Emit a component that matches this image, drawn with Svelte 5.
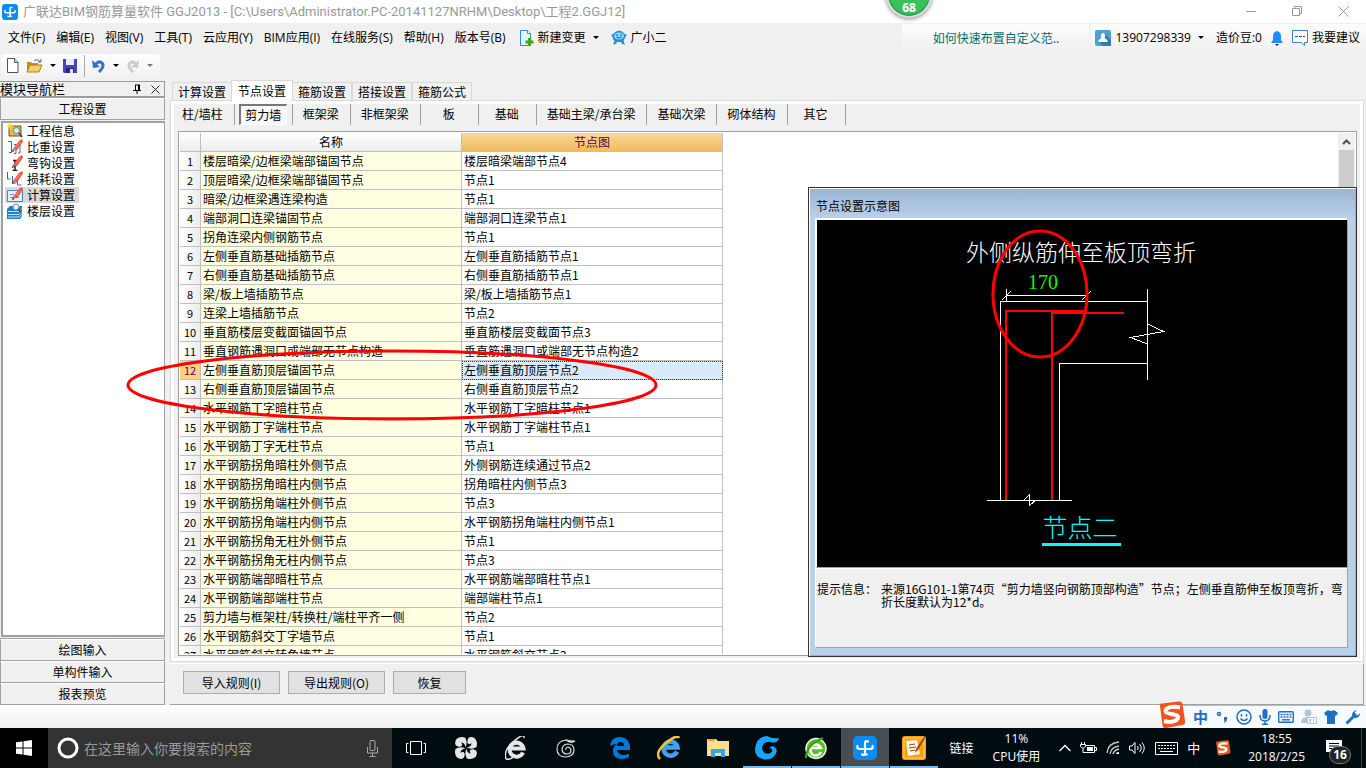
<script lang="ts">
  const menus = ["文件(F)", "编辑(E)", "视图(V)", "工具(T)", "云应用(Y)", "BIM应用(I)", "在线服务(S)", "帮助(H)", "版本号(B)"];
  const navItems = [
    { icon: "info", label: "工程信息" },
    { icon: "weight", label: "比重设置" },
    { icon: "hook", label: "弯钩设置" },
    { icon: "loss", label: "损耗设置" },
    { icon: "calc", label: "计算设置" },
    { icon: "floor", label: "楼层设置" },
  ];
  const navSections = ["绘图输入", "单构件输入", "报表预览"];
  const tabs = ["计算设置", "节点设置", "箍筋设置", "搭接设置", "箍筋公式"];
  const categories = ["柱/墙柱", "剪力墙", "框架梁", "非框架梁", "板", "基础", "基础主梁/承台梁", "基础次梁", "砌体结构", "其它"];
  const rows = [
    ["楼层暗梁/边框梁端部锚固节点", "楼层暗梁端部节点4"],
    ["顶层暗梁/边框梁端部锚固节点", "节点1"],
    ["暗梁/边框梁遇连梁构造", "节点1"],
    ["端部洞口连梁锚固节点", "端部洞口连梁节点1"],
    ["拐角连梁内侧钢筋节点", "节点1"],
    ["左侧垂直筋基础插筋节点", "左侧垂直筋插筋节点1"],
    ["右侧垂直筋基础插筋节点", "右侧垂直筋插筋节点1"],
    ["梁/板上墙插筋节点", "梁/板上墙插筋节点1"],
    ["连梁上墙插筋节点", "节点2"],
    ["垂直筋楼层变截面锚固节点", "垂直筋楼层变截面节点3"],
    ["垂直钢筋遇洞口或端部无节点构造", "垂直筋遇洞口或端部无节点构造2"],
    ["左侧垂直筋顶层锚固节点", "左侧垂直筋顶层节点2"],
    ["右侧垂直筋顶层锚固节点", "右侧垂直筋顶层节点2"],
    ["水平钢筋丁字暗柱节点", "水平钢筋丁字暗柱节点1"],
    ["水平钢筋丁字端柱节点", "水平钢筋丁字端柱节点1"],
    ["水平钢筋丁字无柱节点", "节点1"],
    ["水平钢筋拐角暗柱外侧节点", "外侧钢筋连续通过节点2"],
    ["水平钢筋拐角暗柱内侧节点", "拐角暗柱内侧节点3"],
    ["水平钢筋拐角端柱外侧节点", "节点3"],
    ["水平钢筋拐角端柱内侧节点", "水平钢筋拐角端柱内侧节点1"],
    ["水平钢筋拐角无柱外侧节点", "节点1"],
    ["水平钢筋拐角无柱内侧节点", "节点3"],
    ["水平钢筋端部暗柱节点", "水平钢筋端部暗柱节点1"],
    ["水平钢筋端部端柱节点", "端部端柱节点1"],
    ["剪力墙与框架柱/转换柱/端柱平齐一侧", "节点2"],
    ["水平钢筋斜交丁字墙节点", "节点1"],
    ["水平钢筋斜交转角墙节点", "水平钢筋斜交节点3"],
  ];

  let activeNav = $state(4);
  let activeTab = $state(1);
  let activeCategory = $state(1);
  let activeRow = $state(11);
</script>

{#snippet logo(size: number)}
  <svg width={size} height={size} viewBox="0 0 24 24">
    <rect width="24" height="24" rx="5" fill="#0a8cf0" />
    <path d="M15 5.500q-3-1.500-3 2v9q0 3.500-3 2M4.500 10q-1 3 2.500 3h10q3.500 0 2.500-3M12 18.500h2" fill="none" stroke="#fff" stroke-width="2.200" stroke-linecap="round" />
  </svg>
{/snippet}

{#snippet sogou(size: number)}
  <svg width={size} height={size} viewBox="0 0 28 28">
    <path d="M2 5Q1 3 4 2.500L21 .5q3-.5 3.500 2.500L27 20q.5 3-2.500 4L8 27q-3 .5-3.500-2.500z" fill="#f0521c" />
    <path d="M22 6.500C14 4.500 7 7 7.500 10.500c.5 3 13 2 12.500 6-.5 4-8 5.500-14 3.500" fill="none" stroke="#fff" stroke-width="4" />
  </svg>
{/snippet}

{#snippet pencil()}
  <path d="M5.500 10.500 12 2l3-2 1 2.500-6 8.500z" fill="#f0503c" />
  <path d="m5.500 10.500-.5 2.500 3-1z" fill="#5a3a30" />
  <path d="m8 9.500 5.500-6.500" stroke="#ff9c8a" />
{/snippet}

<div class="desktop">
  <header class="titlebar">
    {@render logo(16)}
    <h1>广联达BIM钢筋算量软件 GGJ2013 - [C:\Users\Administrator.PC-20141127NRHM\Desktop\工程2.GGJ12]</h1>
    <div class="window-buttons">
      <button aria-label="最小化"><svg width="11" height="11"><path d="M0 5.500h10" /></svg></button>
      <button aria-label="还原"><svg width="11" height="11"><path d="M.5 2.500h7v7h-7zM2.500 2.500v-2h7v7h-2" /></svg></button>
      <button aria-label="关闭"><svg width="11" height="11"><path d="m.5.5 10 10m0-10-10 10" /></svg></button>
    </div>
    <div class="score">68</div>
  </header>

  <nav class="menubar">
    {#each menus as menu}
      <button>{menu}</button>
    {/each}
    <button class="with-icon">
      <svg width="15" height="16" viewBox="0 0 15 16">
        <path d="M1.500.5h7l3 3v12h-10z" fill="#e2f3fc" stroke="#2b8fc9" />
        <path d="M8.500.5v3h3" fill="#fff" stroke="#2b8fc9" />
        <path d="M9 8h3v2.500h2.500v3H12V16H9v-2.500H6.500v-3H9z" fill="#45a81c" />
      </svg>
      新建变更
      <i class="caret"></i>
    </button>
    <button class="with-icon">
      <svg width="16" height="16" viewBox="0 0 16 16">
        <path d="M1.500 7 0 5l2-1q6-7 12 0l2 1-1.500 2Q13 10 12.500 11l1.500 3.500-3-.5-1-2H6l-1 2-3 .5L3.500 11Q2 10 1.500 7z" fill="#1e93e6" />
        <ellipse cx="8" cy="6" rx="5" ry="3.500" fill="#8fd4fa" />
        <path d="M6 4v2m4-2v2M5.500 7q2.500 2 5 0" fill="none" stroke="#145a9c" />
      </svg>
      广小二
    </button>
    <div class="promo"><a href="#help">如何快速布置自定义范..</a></div>
    <div class="account">
      <button class="user">
        <svg width="16" height="16" viewBox="0 0 16 16">
          <rect width="16" height="16" rx="2" fill="#4ba3d3" />
          <path d="m10 4 6 6v6H8l-4-4z" fill="#347fa8" />
          <path d="M8 3a2.500 3 0 0 1 1.500 5l3 2v2h-9v-2l3-2A2.500 3 0 0 1 8 3z" fill="#fff" />
        </svg>
        13907298339
        <i class="caret"></i>
      </button>
      <span>造价豆:0</span>
      <button aria-label="通知">
        <svg width="12" height="16" viewBox="0 0 12 16">
          <path d="M6 1q4 1 4 5v4l2 3H0l2-3V6q0-4 4-5z" fill="#1e8bff" /><path d="M4 14h4l-2 2z" fill="#126" />
        </svg>
      </button>
      <button class="suggest">
        <svg width="16" height="16" viewBox="0 0 16 16">
          <path d="M.5.5h15v12h-3v3l-3-3h-9z" fill="#fff" stroke="#3b7fd4" /><path d="M3 6.500h10" stroke="#247" stroke-dasharray="3 1" />
        </svg>
        我要建议
      </button>
    </div>
  </nav>

  <div class="toolbar-row">
    <div class="toolbar">
      <button aria-label="新建">
        <svg width="12" height="15" viewBox="0 0 12 15"><path d="M.5.5h7l3.500 4v10H.5z" fill="#fff" stroke="#456" /><path d="M7.500.5v4H11" fill="#cde" stroke="#456" /></svg>
      </button>
      <button aria-label="打开">
        <svg width="17" height="15" viewBox="0 0 17 15">
          <path d="M1 14V4h4l1 1h6v9z" fill="#c98d1d" /><path d="m1 14 3-7h12l-3 7z" fill="#f7cf6a" stroke="#b57e1c" />
          <path d="M8 3q4-3 6 1m1-3v3h-3" fill="none" stroke="#46647f" />
        </svg>
      </button>
      <i class="caret"></i>
      <button aria-label="保存">
        <svg width="14" height="14" viewBox="0 0 14 14">
          <path d="M0 0h14v14H1l-1-1z" fill="#4448b5" /><path d="M3 0h8v6H3z" fill="#e8ecfa" /><path d="M3 9h8v5H3z" fill="#252870" /><path d="M7 10h3v4H7z" fill="#dde" />
        </svg>
      </button>
      <span class="divider"></span>
      <button aria-label="撤销">
        <svg width="14" height="14" viewBox="0 0 14 14"><path d="M3 6q4-5 7-2t-3 9" fill="none" stroke="#3272c8" stroke-width="3" /><path d="m0 1 1 8 7-1z" fill="#3272c8" /></svg>
      </button>
      <i class="caret"></i>
      <button aria-label="重做">
        <svg width="14" height="14" viewBox="0 0 14 14"><path d="M11 6Q7 1 4 4t3 9" fill="none" stroke="#ccc" stroke-width="3" /><path d="m13 1-1 8-7-1z" fill="#ccc" /></svg>
      </button>
      <i class="caret faded"></i>
    </div>
  </div>

  <main>
    <aside>
      <div class="aside-head">
        <span>模块导航栏</span>
        <button aria-label="固定"><svg width="9" height="10" viewBox="0 0 9 10"><path d="M2 1h5M2.500 1v5M6 1v5M0 6.500h8M4 7v3" fill="none" stroke="#000" /><path d="M5 1h2v5H5z" /></svg></button>
        <button aria-label="关闭"><svg width="9" height="9" viewBox="0 0 9 9"><path d="m.5.5 8 8m0-8-8 8" stroke="#222" /></svg></button>
      </div>
      <button class="section">工程设置</button>
      <ul>
        {#each navItems as item, i}
          <li>
            <button class:selected={i === activeNav} onclick={() => (activeNav = i)}>
              <svg width="16" height="16" viewBox="0 0 16 16">
                {#if item.icon === "info"}
                  <path d="M2 3h12v10H2z" fill="#e9b64a" stroke="#73521b" />
                  <path d="M3 0v7M0 3h7M1 1l4 4m0-4L1 5" stroke="#ffdf35" />
                  <circle cx="9.500" cy="7.500" r="3" fill="#d6edfb" stroke="#5f86ab" />
                  <path d="m12 10 3 4" stroke="#39536d" stroke-width="2" />
                {:else if item.icon === "weight"}
                  <path d="M1 2.500h3.500v11H2M7 5.500h2v9H7M13 5v9h-2" fill="none" stroke="#3b68b3" />
                  {@render pencil()}
                {:else if item.icon === "hook"}
                  <path d="M8 6v9M5.500 15.500h5M6 5.500h4" stroke="#222" stroke-width="1.500" />
                  {@render pencil()}
                {:else if item.icon === "loss"}
                  <path d="M.5 1v7h3M5.500 5v7h4M10.500 8v6h4" fill="none" stroke="#3b68b3" />
                  {@render pencil()}
                {:else if item.icon === "calc"}
                  <path d="M.5 3.500h15v11H.5z" fill="#e5f0fd" stroke="#4b81cc" />
                  <path d="M3 7.500h4M3 10.500h9" stroke="#6d9ad8" />
                  {@render pencil()}
                {:else}
                  <path d="M3 3h12v10l-2 3H0V6z" fill="#1d80cc" />
                  <path d="M1 8.500h11l3-3M1 11.500h11l3-3M1 14h11l3-3" fill="none" stroke="#bfe5ff" />
                  <circle cx="9" cy="4" r="3" fill="#e6eff5" stroke="#7c8f9e" />
                  <path d="m11 6 3 3" stroke="#555" stroke-width="2" />
                {/if}
              </svg>
              <span>{item.label}</span>
            </button>
          </li>
        {/each}
      </ul>
      {#each navSections as section}
        <button class="section">{section}</button>
      {/each}
    </aside>

    <section class="workspace">
      <div class="tabs" role="tablist">
        {#each tabs as tab, i}
          <button role="tab" aria-selected={i === activeTab} class:active={i === activeTab} onclick={() => (activeTab = i)}>{tab}</button>
        {/each}
      </div>

      <div class="page">
        <div class="categories">
          {#each categories as category, i}
            <button class:pressed={i === activeCategory} onclick={() => (activeCategory = i)}><span>{category}</span></button>
          {/each}
        </div>
        <div class="grid">
          <div class="grid-body">
            <table>
              <colgroup><col class="col-no" /><col class="col-name" /><col class="col-node" /></colgroup>
              <thead>
                <tr><th></th><th>名称</th><th class="current">节点图</th></tr>
              </thead>
              <tbody>
                {#each rows as [name, node], i}
                  <tr class:active={i === activeRow} onclick={() => (activeRow = i)}>
                    <th scope="row">{i + 1}</th>
                    <td class="name">{name}</td>
                    <td class="node">{node}</td>
                  </tr>
                {/each}
              </tbody>
            </table>
          </div>
          <div class="scrollbar">
            <button aria-label="向上滚动"><svg width="9" height="6" viewBox="0 0 9 6"><path d="m1 5 3.500-3.500L8 5" fill="none" stroke="#505050" stroke-width="2" /></svg></button>
            <div class="thumb"></div>
          </div>
        </div>
      </div>

      <div class="actions">
        <button>导入规则(I)</button>
        <button>导出规则(O)</button>
        <button class="narrow">恢复</button>
      </div>

      <div class="dialog" role="dialog" aria-label="节点设置示意图">
        <h2>节点设置示意图</h2>
        <svg class="drawing" viewBox="0 0 530 347">
          <g fill="none" stroke="#fff" shape-rendering="crispEdges">
            <path d="M189.500 69v12M189 75.500h82M185 80l9-9M265 80l9-9" />
            <path d="M183.500 280V81.500h147M330.500 69v91M330.500 143.500h-88V280" />
            <path d="M330.500 104l16 7.500-33 6 17 6.500" />
            <path d="M170 280.500h85M207 280l5-5v11l7-6" />
          </g>
          <text x="264" y="41" class="caption">外侧纵筋伸至板顶弯折</text>
          <text x="226" y="69" class="dimension">170</text>
          <path d="M189 280V91h80M235 280V93h72" fill="none" stroke="#f00" stroke-width="2" />
          <text x="263" y="317" class="node-name">节点二</text>
          <path d="M225 324.500h79" stroke="#0ff" stroke-width="3" />
          <ellipse cx="223" cy="74" rx="47" ry="63" fill="none" stroke="#f00" stroke-width="3" />
        </svg>
        <div class="hint">
          <span>提示信息：</span>
          <p>来源16G101-1第74页“剪力墙竖向钢筋顶部构造”节点；左侧垂直筋伸至板顶弯折，弯<br />折长度默认为12*d。</p>
        </div>
      </div>
    </section>

    <svg class="mark" width="532" height="73" viewBox="0 0 532 73">
      <ellipse cx="266" cy="36" rx="264" ry="34" fill="none" stroke="#f00" stroke-width="3" />
    </svg>
  </main>

  <div class="statusbar">
    <div class="ime">
      <div class="ime-logo">{@render sogou(28)}</div>
      <b>中</b>
      <svg width="14" height="14" viewBox="0 0 14 14"><circle cx="4" cy="4" r="1.500" fill="none" stroke="#1b6fc4" stroke-width="1.500" /><path d="M9 7h3q1 4-3 6 1-2 0-3z" fill="#1b6fc4" /></svg>
      <svg width="16" height="16" viewBox="0 0 16 16"><circle cx="8" cy="8" r="7" fill="none" stroke="#1b6fc4" stroke-width="1.500" /><path d="M5.500 5v2.500M10.500 5v2.500M4.500 9.500q3.500 4 7 0" fill="none" stroke="#1b6fc4" stroke-width="1.500" /></svg>
      <svg width="12" height="16" viewBox="0 0 12 16"><rect x="3.500" width="5" height="10" rx="2.500" fill="#1b6fc4" /><path d="M1 6q0 6 5 6t5-6M6 12v3M3 15.200h6" fill="none" stroke="#1b6fc4" stroke-width="1.500" /></svg>
      <svg width="16" height="12" viewBox="0 0 16 12"><rect x=".7" y=".7" width="14.600" height="10.600" rx="1" fill="none" stroke="#1b6fc4" stroke-width="1.400" /><path d="M2.500 3.500h11M2.500 6h11" stroke="#1b6fc4" stroke-width="1.500" stroke-dasharray="2 1" /><path d="M4 8.800h8" stroke="#1b6fc4" stroke-width="1.400" /></svg>
      <svg width="16" height="16" viewBox="0 0 16 16"><circle cx="7" cy="4" r="3.500" fill="#b4c4da" /><path d="M0 14q0-6 6-6h4v6z" fill="#b4c4da" /><path d="M6.500 8.500h9v6h-9z" fill="#fff" stroke="#b4c4da" /><path d="M8 10.500h2v1H8.500v1.500H10M12.500 10v3" fill="none" stroke="#b4c4da" /></svg>
      <svg width="14" height="14" viewBox="0 0 14 14"><path d="M4 0q3 2 6 0l4 3-2 3-1-.5V14H3V5.500L2 6 0 3z" fill="#1b6fc4" /></svg>
      <svg width="15" height="15" viewBox="0 0 15 15"><path d="m1.500 13.500 8-8" stroke="#1b6fc4" stroke-width="3" /><path d="M12 0 9.500 2.500 12.500 5.500 15 3q0 5-5 5Q7 7 7 5q0-4 5-5z" fill="#1b6fc4" /></svg>
    </div>
  </div>

  <footer class="taskbar">
    <button class="start" aria-label="开始">
      <svg width="16" height="16" viewBox="0 0 16 16"><path d="M0 2.300 6.500 1.400v6.100H0zM7.500 1.200 16 0v7.500H7.500zM0 8.500h6.500v6.100L0 13.700zM7.500 8.500H16V16l-8.500-1.200z" fill="#fff" /></svg>
    </button>
    <label class="search">
      <svg width="22" height="22"><circle cx="11" cy="11" r="9" fill="none" stroke="#fff" stroke-width="3" /></svg>
      <input type="text" placeholder="在这里输入你要搜索的内容" aria-label="搜索" />
      <svg width="11" height="17" viewBox="0 0 11 17"><rect x="3" y=".5" width="5" height="10" rx="1" fill="none" stroke="#aaa" /><path d="M.5 7v6h10V7M5.500 13v3M2.500 16.500h6" fill="none" stroke="#aaa" /></svg>
    </label>
    <div class="apps pinned">
      <button aria-label="任务视图"><svg width="20" height="16" viewBox="0 0 20 16"><path d="M4.500 1.500h11v13h-11zM2.500 3.500h-2v9h2M17.500 3.500h2v9h-2" fill="none" stroke="#fff" /></svg></button>
      <button aria-label="启动器">
        <svg width="22" height="22" viewBox="0 0 22 22">
          <g fill="#e6e6e6">
            <path d="M10.500 10.500Q13 5 10 .5 5-1 1.500 2-1 6 1 8.500q4 2.500 6 0 .5-2-1-3 4 0 4.500 5z" />
            <path d="M11.500 10.500Q17 13 21.500 10 23 5 20 1.500 16-1 13.500 1q-2.500 4 0 6 2 .5 3-1 0 4-5 4.500z" />
            <path d="M11.500 11.500Q9 17 12 21.500q5 1.500 8.500-1.500 2.500-4 .5-6.500-4-2.500-6 0-.5 2 1 3-4 0-4.500-5z" />
            <path d="M10.500 11.500Q5 9 .5 12-1 17 2 20.500q4 2.500 6.500.5 2.500-4 0-6-2-.5-3 1 0-4 5-4.500z" />
          </g>
        </svg>
      </button>
      <button aria-label="浏览器">
        <svg width="22" height="24" viewBox="0 0 22 24"><path d="M18 16.500A7 7 0 1 1 18.500 12.500H6" fill="none" stroke="#e6e6e6" stroke-width="4" /><path d="M1 23Q-2 14 9 5t10-3M1 23q5 1 8-3" fill="none" stroke="#e6e6e6" stroke-width="1.500" /></svg>
      </button>
      <button aria-label="广联达">
        <svg width="20" height="20" viewBox="0 0 20 20"><path d="M19 3q-6 0-9-1-9 1-9 9 0 8 9 8 8-1 8-7 0-6-7-6-5 1-5 6 1 4 5 4 4 0 4-4-1-3-3-3-3 1-2 3M10 2q5 4 9 1" fill="none" stroke="#ddd" stroke-width="1.200" /></svg>
      </button>
    </div>
    <div class="apps">
      <button aria-label="Edge">
        <svg width="20" height="22" viewBox="0 0 20 22"><path d="M0 9Q1 0 10.500 0 20 1 20 11v2H7q1 5 7 5 3 0 5-1.500V20q-3 2-7 2-9 0-9-8 0-5 4-7-4 0-7 2zm7 0h7q0-4-3.500-4T7 9z" fill="#0078d7" /></svg>
      </button>
      <button aria-label="Internet Explorer">
        <svg width="24" height="24" viewBox="0 0 24 24"><path d="M20 15.500a7 7 0 1 1 .5-4H8" fill="none" stroke="#3fa2ea" stroke-width="4.500" /><path d="M3 23Q-3 17 9 7 20-2 22 2" fill="none" stroke="#f6c52d" stroke-width="2.500" /></svg>
      </button>
      <button aria-label="文件资源管理器">
        <svg width="22" height="20" viewBox="0 0 22 20"><path d="M0 1h9l2 2h11v15H0z" fill="#ffe08a" /><path d="M1 1h7v2H1z" fill="#e9a825" /><path d="M4 19v-8h14v8h-4v-4H8v4z" fill="#35a7e0" /></svg>
      </button>
      <button class="running" aria-label="广联达G+">
        <svg width="24" height="24" viewBox="0 0 24 24"><path d="M24 2q-1 5-7 4.500-5-2-8 1-4 5 0 9 5 3 8-1 1-4-3-3 2-3 5-2 4 3 2 7-3 6-10 6Q0 23 0 13 1 1 12 0q5 3 12 2z" fill="#1ba4fb" /></svg>
      </button>
      <button class="running" aria-label="360浏览器">
        <svg width="22" height="24" viewBox="0 0 22 24"><circle cx="11" cy="12.500" r="10" fill="#56bd25" stroke="#e9f7df" stroke-width="1.500" /><path d="M16 16a5.500 5.500 0 1 1 0-4H7" fill="none" stroke="#fff" stroke-width="2.500" /><path d="M1 22Q1 9 18 2" fill="none" stroke="#3d9c1a" stroke-width="2" /></svg>
      </button>
      <button class="running focused" aria-label="广联达BIM钢筋算量软件">{@render logo(24)}</button>
      <button class="running" aria-label="便笺">
        <svg width="24" height="24" viewBox="0 0 24 24"><rect width="24" height="24" rx="3" fill="#f6a019" /><path d="M2 2h20v20H2z" fill="none" stroke="#ffd35c" /><path d="m4 5 11-1 3 14-12 2z" fill="#fff6e0" /><path d="m7 9 6-1M7 12l7-1M8 15l5-1" stroke="#86511a" /><path d="M22 1 14 13l-1 4 3-3 7-12z" fill="#a03a12" /></svg>
      </button>
    </div>
    <div class="tray">
      <span class="links">链接</span>
      <span class="cpu">11%<br />CPU使用</span>
      <svg width="12" height="8" viewBox="0 0 12 8"><path d="m.5 7 5.500-5.500L11.500 7" fill="none" stroke="#fff" stroke-width="1.300" /></svg>
      <svg width="17" height="12" viewBox="0 0 17 12"><path d="M5.500 3.500h9v7H4.500M15 5.500h1.500v3H15M1.500 0v2M4.500 0v2M.5 2.500h5v2l-2 1.500h-1l-2-1.500zM3 6v4.500h2" fill="none" stroke="#fff" /><path d="M7 5h6v4H7z" fill="#fff" /></svg>
      <svg width="14" height="14" viewBox="0 0 14 14"><path d="M1 12Q2 2 13 1M4 13q1-7 9-8M7 13q1-4 6-5" fill="none" stroke="#ccc" stroke-width="1.300" /><path d="M10 13q0-2 3-2v2z" fill="#fff" /></svg>
      <svg width="17" height="14" viewBox="0 0 17 14"><path d="M.5 5H3l3-3.500v11L3 9H.5zM8.500 5q1.500 2 0 4M10.500 3q3.500 4 0 8M13 1.500q4.500 5.500 0 11" fill="none" stroke="#fff" /></svg>
      <svg width="23" height="13" viewBox="0 0 23 13"><path d="M.5.5h22v12H.5z" fill="none" stroke="#fff" /><path d="M3 3.500h17M3 6.500h17" stroke="#fff" stroke-dasharray="2 1" /><path d="M5 9.500h13" stroke="#fff" /></svg>
      <span class="lang">中</span>
      {@render sogou(16)}
      <time>18:55<br />2018/2/25</time>
      <button class="notice" aria-label="操作中心">
        <svg width="16" height="16" viewBox="0 0 16 16"><path d="M0 0h16v12H8l-4 4v-4H0z" fill="#fff" /><path d="M3 3.500h10M3 6h10M3 8.500h6" stroke="#000" /></svg>
        <em>16</em>
      </button>
    </div>
  </footer>
</div>

<style>
  :global(body) {
    margin: 0;
  }

  .desktop {
    display: flex;
    flex-direction: column;
    height: 100vh;
    overflow: hidden;
    background: #f0f0f0;
    color: #000;
    font: 12px/16px "Noto Sans CJK SC", sans-serif;
  }

  button {
    padding: 0;
    border: 0;
    background: none;
    color: inherit;
    font: inherit;
    white-space: nowrap;
  }

  svg {
    flex: none;
    display: block;
  }

  .titlebar {
    position: relative;
    flex: none;
    display: flex;
    align-items: center;
    gap: 5px;
    height: 23px;
    padding-left: 2px;
    background: #fff;
    color: #999;
  }

  h1 {
    flex: 1;
    margin: 0;
    font: 13px/16px Roboto, "Noto Sans CJK SC", sans-serif;
    white-space: nowrap;
  }

  .window-buttons {
    display: flex;
  }

  .window-buttons button {
    display: flex;
    justify-content: center;
    align-items: center;
    width: 46px;
    height: 20px;
  }

  .window-buttons path {
    fill: none;
    stroke: #999;
  }

  .score {
    position: absolute;
    top: -28px;
    left: 886px;
    z-index: 2;
    display: flex;
    justify-content: center;
    align-items: flex-end;
    width: 42px;
    height: 42px;
    border: 2px solid #ddd;
    border-radius: 50%;
    background: #3cc05c;
    box-shadow: 0 1px 4px #888, inset 0 -1px 2px #16803a;
    color: #fff;
    font: bold 12px/16px "Open Sans", sans-serif;
  }

  .menubar {
    flex: none;
    display: flex;
    align-items: center;
    height: 29px;
    padding-left: 2px;
    font-family: "Open Sans", "Noto Sans CJK SC", sans-serif;
  }

  .menubar > button {
    padding: 0 5px 0 6px;
  }

  .menubar > .with-icon {
    display: flex;
    align-items: center;
    gap: 4px;
    padding: 0 1px 0 8px;
  }

  .caret {
    flex: none;
    width: 0;
    margin: 0 3px;
    border: 3px solid transparent;
    border-top-color: #000;
    border-bottom: 0;
  }

  .caret.faded {
    border-top-color: #777;
  }

  .promo,
  .account {
    display: flex;
    align-items: center;
    height: 28px;
    background: linear-gradient(#fcfcfc, #f0f0f0);
  }

  .promo {
    justify-content: center;
    width: 187px;
    margin-left: auto;
  }

  .promo a {
    color: #0b6a6a;
    text-decoration: none;
    font-family: "Noto Sans CJK SC", sans-serif;
  }

  .account {
    gap: 9px;
    margin-left: 2px;
    padding: 0 6px 0 4px;
  }

  .user,
  .suggest {
    display: flex;
    align-items: center;
    gap: 4px;
  }

  .toolbar-row {
    flex: none;
    height: 28px;
  }

  .toolbar {
    display: flex;
    align-items: center;
    gap: 7px;
    width: 153px;
    height: 23px;
    margin: 2px 0 0 1px;
    padding-left: 6px;
    border-radius: 3px;
    background: linear-gradient(#fdfdfd, #f2f2f2);
  }

  .toolbar .caret {
    margin: 0;
  }

  .divider {
    width: 1px;
    height: 22px;
    background: #aaa;
  }

  main {
    position: relative;
    flex: 1;
    display: flex;
    gap: 5px;
    min-height: 0;
  }

  aside {
    flex: none;
    display: flex;
    flex-direction: column;
    width: 165px;
  }

  .aside-head {
    display: flex;
    align-items: center;
    gap: 9px;
    height: 14px;
    margin: 1px 0;
    padding-right: 4px;
    border: 1px solid #999;
    border-left: 0;
    line-height: 14px;
  }

  .aside-head span {
    flex: 1;
    font-size: 13px;
  }

  .section {
    flex: none;
    height: 22px;
    border: 1px solid #a0a0a0;
    border-top-color: #fff;
    background: #f0f0f0;
    box-shadow: 0 -1px #a0a0a0;
  }

  ul {
    flex: 1;
    margin: 1px 0 2px 1px;
    padding: 0 2px;
    border: 2px solid #a0a0a0;
    border-right-width: 1px;
    background: #fff;
    list-style: none;
  }

  li button {
    display: flex;
    gap: 4px;
    height: 16px;
    padding: 0 4px 0 2px;
    line-height: 16px;
  }

  li .selected {
    background: #d9d9d9;
  }

  .workspace {
    position: relative;
    flex: 1;
    display: flex;
    flex-direction: column;
    min-width: 0;
    padding-right: 2px;
  }

  .tabs {
    flex: none;
    display: flex;
    align-items: flex-end;
    height: 20px;
    padding-left: 2px;
  }

  .tabs button {
    width: 60px;
    height: 18px;
    border: 1px solid #d9d9d9;
    border-bottom: 0;
    line-height: 16px;
  }

  .tabs .active {
    z-index: 1;
    width: 62px;
    height: 21px;
    margin: 0 -1px -1px;
    background: #fff;
  }

  .page {
    flex: 1;
    display: flex;
    flex-direction: column;
    min-height: 0;
    padding: 0 4px 5px;
    border: 1px solid #d9d9d9;
    outline: 3px solid #fff;
    outline-offset: -4px;
  }

  .categories {
    flex: none;
    display: flex;
    height: 22px;
    margin: 2px 0 6px;
  }

  .categories button {
    min-width: 58px;
    padding: 0 11px 0 10px;
    border-right: 1px solid #a0a0a0;
  }

  .categories button:first-child {
    padding: 0 11px 0 7px;
  }

  .categories .pressed {
    padding: 0 5px 0 4px;
  }

  .categories .pressed span {
    display: block;
    padding: 1px 4px;
    border: 1px solid #777;
    border-width: 2px 1px 1px 2px;
    border-color: #777 #fff #fff #777;
    background: #f8f8f8;
  }

  .grid {
    flex: 1;
    display: flex;
    min-height: 0;
    margin: 0 2px 0 3px;
    padding: 1px;
    border: 1px solid #a0a0a0;
    background: #fff;
  }

  .grid-body {
    flex: 1;
    overflow: hidden;
  }

  table {
    width: 543px;
    border-spacing: 0;
    table-layout: fixed;
  }

  .col-no {
    width: 21px;
  }

  .col-name,
  .col-node {
    width: 261px;
  }

  th,
  td {
    height: 18px;
    padding: 0;
    border-right: 1px solid #c0c0c0;
    border-bottom: 1px solid #c0c0c0;
    font-weight: normal;
    line-height: 18px;
    white-space: nowrap;
  }

  th {
    background: linear-gradient(#fff, #ececec);
    text-align: center;
  }

  tbody th {
    background: linear-gradient(90deg, #fff, #ececec);
    font-size: 11px;
  }

  .current {
    background: linear-gradient(#f8d89a, #f0bd5a);
    color: #5a0050;
  }

  td {
    padding-left: 2px;
  }

  .name {
    background: #ffffe1;
  }

  tr.active th {
    background: #ffcf85;
    color: #5a0050;
  }

  tr.active .node {
    outline: 1px dotted #333;
    outline-offset: -1px;
    background: #d9eaf9;
  }

  .scrollbar {
    display: flex;
    flex-direction: column;
    width: 17px;
    background: #f0f0f0;
  }

  .scrollbar button {
    display: flex;
    justify-content: center;
    align-items: center;
    height: 17px;
  }

  .thumb {
    height: 150px;
    margin: 0 1px;
    background: #cdcdcd;
  }

  .actions {
    flex: none;
    display: flex;
    gap: 8px;
    height: 33px;
    margin-top: 1px;
    padding: 7px 0 0 13px;
    border-top: 1px solid #fff;
    border-bottom: 1px solid #a0a0a0;
    border-right: 1px solid #a0a0a0;
  }

  .actions button {
    width: 97px;
    height: 23px;
    border: 1px solid #adadad;
    background: #e1e1e1;
  }

  .actions .narrow {
    width: 73px;
  }

  .dialog {
    position: absolute;
    right: 9px;
    bottom: 48px;
    display: flex;
    flex-direction: column;
    width: 533px;
    padding: 1px 8px 8px 6px;
    border: 1px solid #333;
    background: linear-gradient(#99b4d1, #b9d0e9 30px);
    box-shadow: inset 1px 1px #fff, inset -1px -1px #5cc4e8;
  }

  h2 {
    margin: 0;
    padding: 9px 1px 4px;
    font: 12px/16px "Noto Sans CJK SC", sans-serif;
  }

  .drawing {
    border: 2px solid #a0a0a0;
    border-width: 2px 1px 1px 2px;
    border-color: #fff #a0a0a0 #a0a0a0 #fff;
    background: #000;
  }

  .drawing text {
    text-anchor: middle;
    font-family: "Noto Sans CJK SC", sans-serif;
    font-weight: 300;
  }

  .caption {
    fill: #fff;
    font-size: 23px;
  }

  .drawing .dimension {
    fill: #0f0;
    font-family: "Liberation Serif", serif;
    font-size: 20px;
  }

  .node-name {
    fill: #0ff;
    font-size: 25px;
  }

  .hint {
    display: flex;
    height: 65px;
    padding: 13px 0 0 1px;
    border: 1px solid #fff;
    border-right-color: #a0a0a0;
    border-bottom-color: #a0a0a0;
    background: #f0f0f0;
    line-height: 13px;
  }

  .hint span {
    width: 64px;
  }

  .hint p {
    margin: 0;
    white-space: nowrap;
  }

  .mark {
    position: absolute;
    top: 269px;
    left: 126px;
    pointer-events: none;
  }

  .statusbar {
    flex: none;
    display: flex;
    justify-content: flex-end;
    height: 23px;
    background: linear-gradient(#fff, #f0f0f0);
  }

  .ime {
    position: relative;
    display: flex;
    align-items: center;
    gap: 7px;
    padding: 0 6px 0 13px;
    border-top: 1px solid #aebfd6;
    background: #f7fafe;
    color: #1b6fc4;
    font-size: 15px;
  }

  .ime-logo {
    position: absolute;
    top: -5px;
    left: -22px;
  }

  .taskbar {
    flex: none;
    display: flex;
    height: 40px;
    background: #000c10;
    color: #fff;
  }

  .start {
    display: flex;
    justify-content: center;
    align-items: center;
    width: 48px;
    background: #000;
  }

  .search {
    display: flex;
    align-items: center;
    gap: 5px;
    width: 321px;
    padding: 0 14px 0 9px;
    background: #333;
  }

  .search input {
    flex: 1;
    min-width: 0;
    padding: 0;
    border: 0;
    outline: 0;
    background: none;
    color: #fff;
    font: 14px/20px "Noto Sans CJK SC", sans-serif;
  }

  .search input::placeholder {
    color: #999;
    opacity: 1;
  }

  .apps {
    display: flex;
    gap: 1px;
  }

  .pinned {
    gap: 2px;
    margin-right: 6px;
  }

  .apps button {
    display: flex;
    justify-content: center;
    align-items: center;
    width: 48px;
    border-top: 2px solid transparent;
    border-bottom: 2px solid transparent;
  }

  .apps .running {
    border-bottom-color: #76b9ed;
  }

  .apps .focused {
    background: #454f53;
    background-clip: border-box;
  }

  .tray {
    flex: 1;
    display: flex;
    justify-content: flex-end;
    align-items: center;
    gap: 9px;
    padding-right: 4px;
  }

  .cpu,
  time {
    text-align: center;
    line-height: 18px;
    font-family: "Open Sans", "Noto Sans CJK SC", sans-serif;
    white-space: nowrap;
  }

  .cpu,
  .links {
    margin-right: 10px;
  }

  .lang {
    margin-right: 6px;
    font-size: 13px;
  }

  time {
    margin: 0 10px 0 8px;
  }

  .notice {
    position: relative;
    width: 38px;
    height: 40px;
    padding-left: 2px;
    border-right: 1px solid #444;
  }

  .notice em {
    position: absolute;
    right: 10px;
    bottom: 4px;
    width: 20px;
    border: 1px solid #777;
    border-radius: 9px;
    background: #222;
    font: bold 12px/16px "Open Sans", sans-serif;
  }
</style>
